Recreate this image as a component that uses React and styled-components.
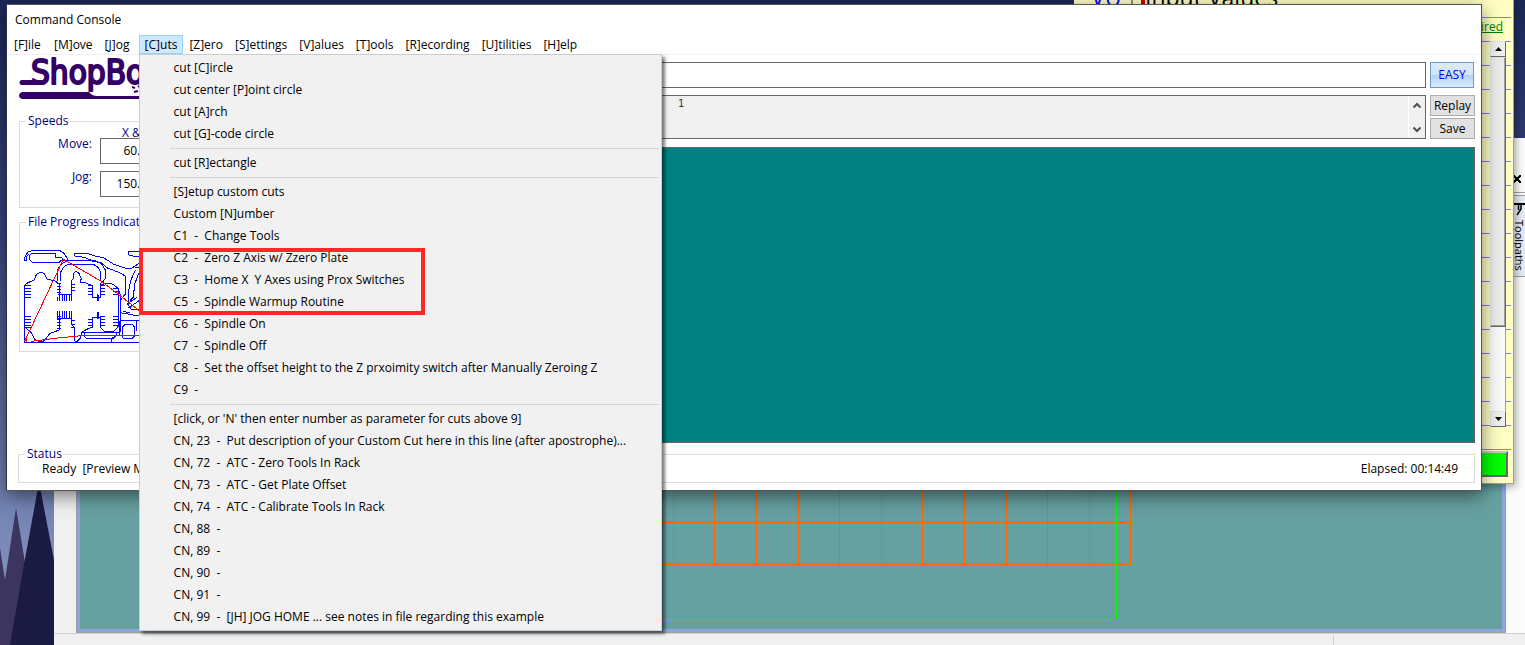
import React, { useState } from 'react';
import styled, { createGlobalStyle } from 'styled-components';

const menus = [
    '[F]ile',
    '[M]ove',
    '[J]og',
    '[C]uts',
    '[Z]ero',
    '[S]ettings',
    '[V]alues',
    '[T]ools',
    '[R]ecording',
    '[U]tilities',
    '[H]elp',
];

const cutGroups = [
    ['cut [C]ircle', 'cut center [P]oint circle', 'cut [A]rch', 'cut [G]-code circle'],
    ['cut [R]ectangle'],
    [
        '[S]etup custom cuts',
        'Custom [N]umber',
        'C1  -  Change Tools',
        'C2  -  Zero Z Axis w/ Zzero Plate',
        'C3  -  Home X  Y Axes using Prox Switches',
        'C5  -  Spindle Warmup Routine',
        'C6  -  Spindle On',
        'C7  -  Spindle Off',
        'C8  -  Set the offset height to the Z prxoimity switch after Manually Zeroing Z',
        'C9  -',
    ],
    [
        "[click, or 'N' then enter number as parameter for cuts above 9]",
        'CN, 23  -  Put description of your Custom Cut here in this line (after apostrophe)...',
        'CN, 72  -  ATC - Zero Tools In Rack',
        'CN, 73  -  ATC - Get Plate Offset',
        'CN, 74  -  ATC - Calibrate Tools In Rack',
        'CN, 88  -',
        'CN, 89  -',
        'CN, 90  -',
        'CN, 91  -',
        'CN, 99  -  [JH] JOG HOME ... see notes in file regarding this example',
    ],
];

const brightLines = [714, 756, 798, 922, 964, 1006, 1130];
const dimLines = [673, 839, 881, 1047, 1089];

export default function App() {
    const [command, setCommand] = useState('');
    const [move, setMove] = useState('60.00');
    const [jog, setJog] = useState('150.00');
    const [openMenu, setOpenMenu] = useState('[C]uts');

    return (
        <Desktop>
            <GlobalStyle />
            <Trees />
            <DesignWindow>
                <DesignBody>
                    <Canvas>
                        <Grid />
                    </Canvas>
                    <Dock>
                        <DockClose aria-label="Close">
                            <svg width="8" height="8" viewBox="0 0 8 8" shapeRendering="crispEdges">
                                <path d="M0 0l8 8M8 0l-8 8" stroke="#000" strokeWidth="2" />
                            </svg>
                        </DockClose>
                        <DockTab>
                            <svg width="12" height="14" viewBox="0 0 12 14">
                                <path d="M0 1h12" stroke="#000" strokeWidth="2" />
                                <path d="M5.5 1v6M8 1v5L4 12" fill="none" stroke="#000" strokeWidth="1.5" />
                            </svg>
                            <span>Toolpaths</span>
                        </DockTab>
                    </Dock>
                </DesignBody>
                <DesignStatus><i /></DesignStatus>
            </DesignWindow>

            <PositionWindow>
                <PositionTitle><b>VU</b><i /><span>Input Values</span></PositionTitle>
                <Required href="#required">Required</Required>
                <Scroll>
                    <ScrollButton aria-label="Scroll up"><Triangle up /></ScrollButton>
                    <Thumb />
                    <ScrollButton aria-label="Scroll down"><Triangle /></ScrollButton>
                </Scroll>
                <GoButton aria-label="Go" />
            </PositionWindow>

            <Console>
                <Title>Command Console</Title>
                <MenuBar>
                    {menus.map(label => (
                        <MenuSlot key={label}>
                            <MenuButton $active={label === openMenu} onClick={() => setOpenMenu(openMenu === label ? '' : label)}>
                                {label}
                            </MenuButton>
                            {label === '[C]uts' && openMenu === label && <CutsMenu />}
                        </MenuSlot>
                    ))}
                </MenuBar>
                <Body>
                    <Side>
                        <Logo />
                        <Speeds>
                            <legend>Speeds</legend>
                            <Axis>X &amp; Y</Axis>
                            <label htmlFor="move">Move:</label>
                            <input id="move" value={move} onChange={e => setMove(e.target.value)} />
                            <label htmlFor="jog">Jog:</label>
                            <input id="jog" value={jog} onChange={e => setJog(e.target.value)} />
                        </Speeds>
                        <Progress>
                            <legend>File Progress Indicator</legend>
                            <Toolpath />
                        </Progress>
                    </Side>
                    <Main>
                        <Row>
                            <Command aria-label="Command" value={command} onChange={e => setCommand(e.target.value)} />
                            <EasyButton>EASY</EasyButton>
                        </Row>
                        <Row>
                            <History>
                                <textarea aria-label="History" readOnly value="1" />
                                <HistoryScroll>
                                    <Chevron up />
                                    <Chevron />
                                </HistoryScroll>
                            </History>
                            <Stack>
                                <Button>Replay</Button>
                                <Button>Save</Button>
                            </Stack>
                        </Row>
                        <Preview />
                    </Main>
                </Body>
                <Status>
                    <legend>Status</legend>
                    <StatusLine>
                        <span>Ready  [Preview Mode]</span>
                        <span>Elapsed: 00:14:49</span>
                    </StatusLine>
                </Status>
            </Console>
        </Desktop>
    );
}

function CutsMenu() {
    return (
        <Menu role="menu">
            {cutGroups.map((group, i) => (
                <MenuGroup key={i}>
                    {group.map(text => <MenuItem role="menuitem" key={text}>{text}</MenuItem>)}
                </MenuGroup>
            ))}
            <Highlight />
        </Menu>
    );
}

function Trees() {
    return (
        <TreeArt width="54" height="245" viewBox="0 400 54 245">
            <path d="M0 548L5 580L16 508L27 575V645H0z" fill="#3c3560" />
            <path d="M10 645L23 570L39 482L54 560V645z" fill="#1b1a42" />
        </TreeArt>
    );
}

function Grid() {
    return (
        <svg width="1100" height="139" viewBox="80 490 1100 139" shapeRendering="crispEdges">
            <path d={dimLines.map(x => `M${x + 0.5} 480V564`).join('')} stroke="#e06c1c" />
            <path d={brightLines.map(x => `M${x + 0.5} 480V564`).join('')} stroke="#ff6600" />
            <path d="M381 522.5H1131M381 564.5H1131" stroke="#ff6600" />
            <path d="M366 619.5H1117M1116.5 480V620" stroke="#00ff00" fill="none" />
        </svg>
    );
}

function Triangle({ up }) {
    return (
        <svg width="7" height="4" viewBox="0 0 7 4">
            <path d={up ? 'M0 4L3.5 0L7 4z' : 'M0 0L3.5 4L7 0z'} fill="#000" />
        </svg>
    );
}

function Chevron({ up }) {
    return (
        <svg width="8" height="7" viewBox="0 0 8 7">
            <path d={up ? 'M0.5 5.5L4 2L7.5 5.5' : 'M0.5 1.5L4 5L7.5 1.5'} fill="none" stroke="#505050" strokeWidth="2" />
        </svg>
    );
}

function Logo() {
    return (
        <LogoArt width="200" height="46" viewBox="18 55 200 46" fill="#330066" stroke="#330066">
            <text x="30" y="84" fontSize="33" strokeWidth="2" strokeLinejoin="round">ShopBot</text>
            <path d="M21 82.5H42" fill="none" strokeWidth="5" strokeLinecap="round" />
            <path d="M21 92H88Q91 96 96 96H214V99H21Q18 98 18 96Q18 93 21 92z" stroke="none" />
            <path d="M131 87l3 1M133 92l4-1M137 86l3 2" fill="none" strokeWidth="2" />
        </LogoArt>
    );
}

function Toolpath() {
    return (
        <svg width="180" height="104" viewBox="6 0 540 312" fill="none" stroke="#0000ff" strokeWidth="3" shapeRendering="crispEdges">
            {/* brackets along the top */}
            <path d="M20 52V40L30 24L44 19H124L138 28L147 42V50H138L130 40H112V29H40L34 34V46L44 55H124L131 48" />
            <path d="M34 29L26 38V50H20" />
            <path d="M118 110V78L130 60L148 50H232L250 58L262 78V104L250 118" />
            <path d="M128 110V84L138 68L152 61H226L240 70L248 84V110" />
            <path d="M170 28H208L232 36L258 42L286 60L322 72H342L363 58M170 28V36L200 40L226 52L250 56L268 72L300 84L322 96V150L306 170V230" />
            <path d="M330 22H363M330 22V32L345 36H363M350 70H363M352 78L338 110L330 150V182L340 196H363M363 86L350 120L346 160L336 170" />
            <path d="M326 182L356 160M332 192L363 170M306 206L363 216M314 202L336 206" />
            {/* left body */}
            <path d="M19 294V124L30 116L48 108L56 90L68 84L80 90L88 106L110 110L124 120V152" />
            <path d="M19 248L40 266L50 286L64 293H74L84 284L96 268L124 258V214" />
            <path d="M19 124H38M19 133H38M19 142H38M19 151H38M19 159H38M19 218H38M19 226H38M19 235H38M19 243H38M19 251H38" />
            <path d="M118 117H130M118 126H130M118 135H130M118 144H130M118 217H130M118 226H130M118 235H130M118 244H130M118 253H130" />
            <path d="M120 152H160M118 160V172M125 152V172M132 152V172M139 152V172M146 152V172M153 152V172M160 145V172" />
            <path d="M120 222H160M118 202V224M125 202V224M132 202V224M139 202V224M146 202V224M153 202V224M160 202V240" />
            {/* middle body */}
            <path d="M160 145V110L166 104V90L172 82L182 86L190 104L186 114L200 116L222 124V160H246V118" />
            <path d="M160 240L168 250V290L176 294L188 282L192 264L206 256L222 250V220H246V252" />
            <path d="M160 120H172M160 130H172M160 140H172M160 230H172M160 240H172M160 250H172" />
            <path d="M211 124H222M211 133H222M211 142H222M211 151H222M211 226H222M211 235H222M211 244H222" />
            <path d="M238 150V172M242 152V172M238 204V224M242 204V224" />
            {/* right body */}
            <path d="M246 124L262 118H280L300 132V248L288 262L262 264L246 250M300 132L306 150V262L296 268" />
            <path d="M247 125H262M247 134H262M247 143H262M247 152H262M247 216H262M247 225H262M247 234H262M247 243H262" />
            <path d="M286 134H302M286 143H302M286 152H302M286 216H302M286 225H302M286 234H302M286 243H302" />
            <path d="M192 264H294V276L286 283H206L198 276V264M280 294V283L294 276" />
            <path d="M306 229H363V276M304 230V274M354 230V262M312 280V250L322 240H342L350 250V276L342 284H320z" />
            <path d="M19 295H364" />
            <g stroke="#ff0000">
                <path d="M20 292L136 46L250 112L300 150L366 202" />
                <path d="M26 280V294M40 292L120 282L190 275H280L364 273" />
            </g>
        </svg>
    );
}

const GlobalStyle = createGlobalStyle`
    *{
        box-sizing: border-box;
    }
    body{
        margin: 0;
        font-family: "Open Sans", "Noto Sans", sans-serif;
        font-size: 12px;
        line-height: 16px;
        color: #000;
    }
    button,input,textarea{
        font: inherit;
        margin: 0;
    }
    fieldset{
        margin: 0;
        padding: 0;
        min-width: 0;
        border: 1px solid #dcdcdc;
    }
    legend{
        margin-left: 6px;
        padding: 0 2px;
        color: #000080;
    }
    svg{
        display: block;
        flex: none;
    }
`;
const Desktop = styled.div`
    position: relative;
    min-height: 100vh;
    overflow: hidden;
    background: linear-gradient(#1c2759, #36457c 35%, #6f80b0 75%, #8f9bc4);
`;
const TreeArt = styled.svg`
    position: absolute;
    left: 0;
    bottom: 0;
`;
const DesignWindow = styled.section`
    position: absolute;
    top: 138px;
    left: 54px;
    right: 0;
    bottom: 0;
    display: flex;
    flex-direction: column;
    background: #f0f0f0;
`;
const DesignBody = styled.div`
    flex: 1;
    display: flex;
    padding-left: 22px;
`;
const Canvas = styled.div`
    flex: 1;
    display: flex;
    align-items: flex-end;
    min-width: 0;
    overflow: hidden;
    background: #66a0a0;
    border: 4px solid #8ca6e0;
    outline: 1px solid #a0a0a0;
    outline-offset: -1px;
`;
const Dock = styled.div`
    width: 19px;
    padding: 37px 0 0 7px;
    background: #fcfcfc;
`;
const DockClose = styled.button`
    display: block;
    width: 12px;
    height: 18px;
    margin-bottom: 2px;
    padding: 0 0 10px;
    border: 0;
    border-bottom: 1px solid #a0a0a0;
    background: none;
`;
const DockTab = styled.div`
    display: flex;
    flex-direction: column;
    gap: 3px;
    height: 82px;
    padding-top: 7px;
    border: 1px solid #a0a0a0;
    border-width: 1px 0;
    background: #e6ecf4;

    span{
        writing-mode: vertical-rl;
        line-height: 12px;
        font-size: 11px;
    }
`;
const DesignStatus = styled.footer`
    display: flex;
    justify-content: flex-end;
    height: 12px;
    padding: 1px 0 0;
    border-top: 1px solid #d0d0d0;

    i{
        width: 192px;
        border-left: 1px solid #d0d0d0;
    }
`;
const PositionWindow = styled.section`
    position: absolute;
    top: 0;
    right: 11px;
    width: 440px;
    height: 484px;
    display: flex;
    flex-direction: column;
    align-items: flex-end;
    padding-right: 5px;
    border-right: 1px solid #a0a08c;
    border-bottom: 1px solid #a0a08c;
    background: repeating-linear-gradient(transparent 0 17px, #8080e0 17px 18px, transparent 18px 24px) 0 0 / calc(100% - 2px) 450px no-repeat #ffffc4;
    box-shadow: 2px 3px 8px rgba(0, 0, 0, 0.35);
`;
const PositionTitle = styled.div`
    display: flex;
    align-self: flex-start;
    height: 19px;
    margin-top: -19px;
    margin-left: 5px;
    padding-left: 10px;
    border-left: 2px solid #909078;
    font-size: 23px;
    line-height: 32px;

    b{
        width: 42px;
        margin-right: 8px;
        border-right: 2px solid #909078;
        color: #0000ff;
        font-weight: 400;
    }
    i{
        width: 4px;
        height: 24px;
        background: #d00000;
    }
    b,span{
        height: 24px;
    }
`;
const Required = styled.a`
    height: 22px;
    margin-top: 19px;
    padding-right: 5px;
    color: #008000;
`;
const Scroll = styled.div`
    display: flex;
    flex-direction: column;
    width: 16px;
    height: 386px;
    margin-right: 2px;
    background: #fafafa;
    border-right: 1px solid #a0a0a0;
`;
const ScrollButton = styled.button`
    display: flex;
    align-items: center;
    justify-content: center;
    height: 16px;
    width: 16px;
    padding: 0;
    border: 1px solid;
    border-color: #e3e3e3 #696969 #696969 #e3e3e3;
    background: #f0f0f0;
`;
const Thumb = styled.div`
    width: 16px;
    height: 270px;
    margin-bottom: auto;
    background: #ececec;
    border: 1px solid;
    border-color: #e3e3e3 #696969 #696969 #e3e3e3;
    box-shadow: inset -1px -1px #a0a0a0;
`;
const GoButton = styled.button`
    width: 200px;
    height: 26px;
    margin-top: 24px;
    border: 2px solid;
    border-color: #c8c8b0 #696969 #696969 #c8c8b0;
    background: #00ff00;
`;
const Console = styled.main`
    position: absolute;
    top: 4px;
    left: 6px;
    right: 43px;
    display: flex;
    flex-direction: column;
    padding-bottom: 7px;
    background: #fff;
    border: 1px solid #555;
    border-left-color: #2c3050;
    box-shadow: 0 5px 18px rgba(0, 0, 0, 0.5);
`;
const Title = styled.h1`
    margin: 0;
    padding: 7px 8px;
    font-size: 12px;
    font-weight: 400;
    line-height: 16px;
`;
const MenuBar = styled.nav`
    display: flex;
    height: 20px;
    padding-left: 1px;
    border-bottom: 1px solid #f0f0f0;
`;
const MenuSlot = styled.div`
    position: relative;
`;
const MenuButton = styled.button`
    min-width: 40px;
    height: 19px;
    padding: 0 5px;
    border: 1px solid ${p => p.$active ? '#99d1ff' : 'transparent'};
    background: ${p => p.$active ? '#cce8ff' : 'transparent'};
    line-height: 16px;
    text-align: left;
`;
const Menu = styled.div`
    position: absolute;
    z-index: 2;
    top: 100%;
    left: 0;
    width: 523px;
    padding: 2px;
    background: #f1f1f1;
    border: 1px solid #ccc;
    box-shadow: 3px 3px 3px rgba(0, 0, 0, 0.5);
`;
const MenuGroup = styled.div`
    & + &{
        padding-top: 7px;
        background: linear-gradient(#d5d5d5, #d5d5d5) 28px 3px / 100% 1px no-repeat;
    }
`;
const MenuItem = styled.button`
    display: block;
    width: 100%;
    height: 22px;
    padding: 0 0 0 32px;
    border: 0;
    background: none;
    text-align: left;
    white-space: pre;
`;
const Highlight = styled.div`
    position: absolute;
    top: 193px;
    left: -1px;
    width: 286px;
    height: 67px;
    border: 4px solid #ff2828;
    pointer-events: none;
`;
const Body = styled.div`
    display: flex;
    padding: 0 6px 0 12px;
`;
const Side = styled.div`
    width: 240px;
`;
const LogoArt = styled.svg`
    font-family: "DejaVu Sans Condensed", "DejaVu Sans", sans-serif;
`;
const Speeds = styled.fieldset`
    display: grid;
    grid-template-columns: 72px 66px;
    grid-template-rows: 2px 26px 26px;
    column-gap: 8px;
    row-gap: 7px;
    height: 95px;
    margin-top: 12px;
    color: #000080;

    label{
        line-height: 12px;
        text-align: right;
    }
    input{
        width: 66px;
        padding: 0 11px 0 4px;
        border: 1px solid #666;
        text-align: right;
    }
`;
const Axis = styled.div`
    grid-column: 2;
    padding-left: 22px;
    line-height: 8px;
`;
const Progress = styled.fieldset`
    height: 138px;
    margin-top: 6px;

    svg{
        margin-top: 14px;
    }
`;
const Main = styled.div`
    flex: 1;
    display: flex;
    flex-direction: column;
    gap: 7px;
    min-width: 0;
    padding-top: 7px;
`;
const Row = styled.div`
    display: flex;
    gap: 4px;
`;
const Command = styled.input`
    flex: 1;
    height: 26px;
    border: 1px solid #666;
`;
const EasyButton = styled.button`
    width: 44px;
    height: 26px;
    margin-right: 1px;
    padding: 0;
    border: 1px solid #6c9ad0;
    background: linear-gradient(#dcebfb, #d2e4f8 48%, #b4d0f0 50%, #d8ecff);
    color: #0000ff;
`;
const History = styled.div`
    flex: 1;
    display: flex;
    height: 44px;
    border: 1px solid #666;
    background: #f0f0f0;

    textarea{
        flex: 1;
        padding: 0 0 0 418px;
        border: 0;
        resize: none;
        background: none;
        color: #333;
        font: 10px/16px "DejaVu Sans", sans-serif;
    }
`;
const HistoryScroll = styled.div`
    display: flex;
    flex-direction: column;
    justify-content: space-between;
    align-items: center;
    width: 17px;
    padding: 6px 0 5px;
    border-left: 1px solid #fff;
`;
const Stack = styled.div`
    display: flex;
    flex-direction: column;
    gap: 2px;
`;
const Button = styled.button`
    width: 45px;
    height: 21px;
    padding: 0;
    border: 1px solid #adadad;
    background: #e1e1e1;
`;
const Preview = styled.div`
    height: 296px;
    margin-top: 1px;
    background: #008080;
    border: 1px solid #666;
`;
const Status = styled.fieldset`
    height: 37px;
    margin: 3px 6px 0 11px;
`;
const StatusLine = styled.div`
    display: flex;
    justify-content: space-between;
    padding: 0 16px 0 23px;
    line-height: 14px;
    white-space: pre;
`;
